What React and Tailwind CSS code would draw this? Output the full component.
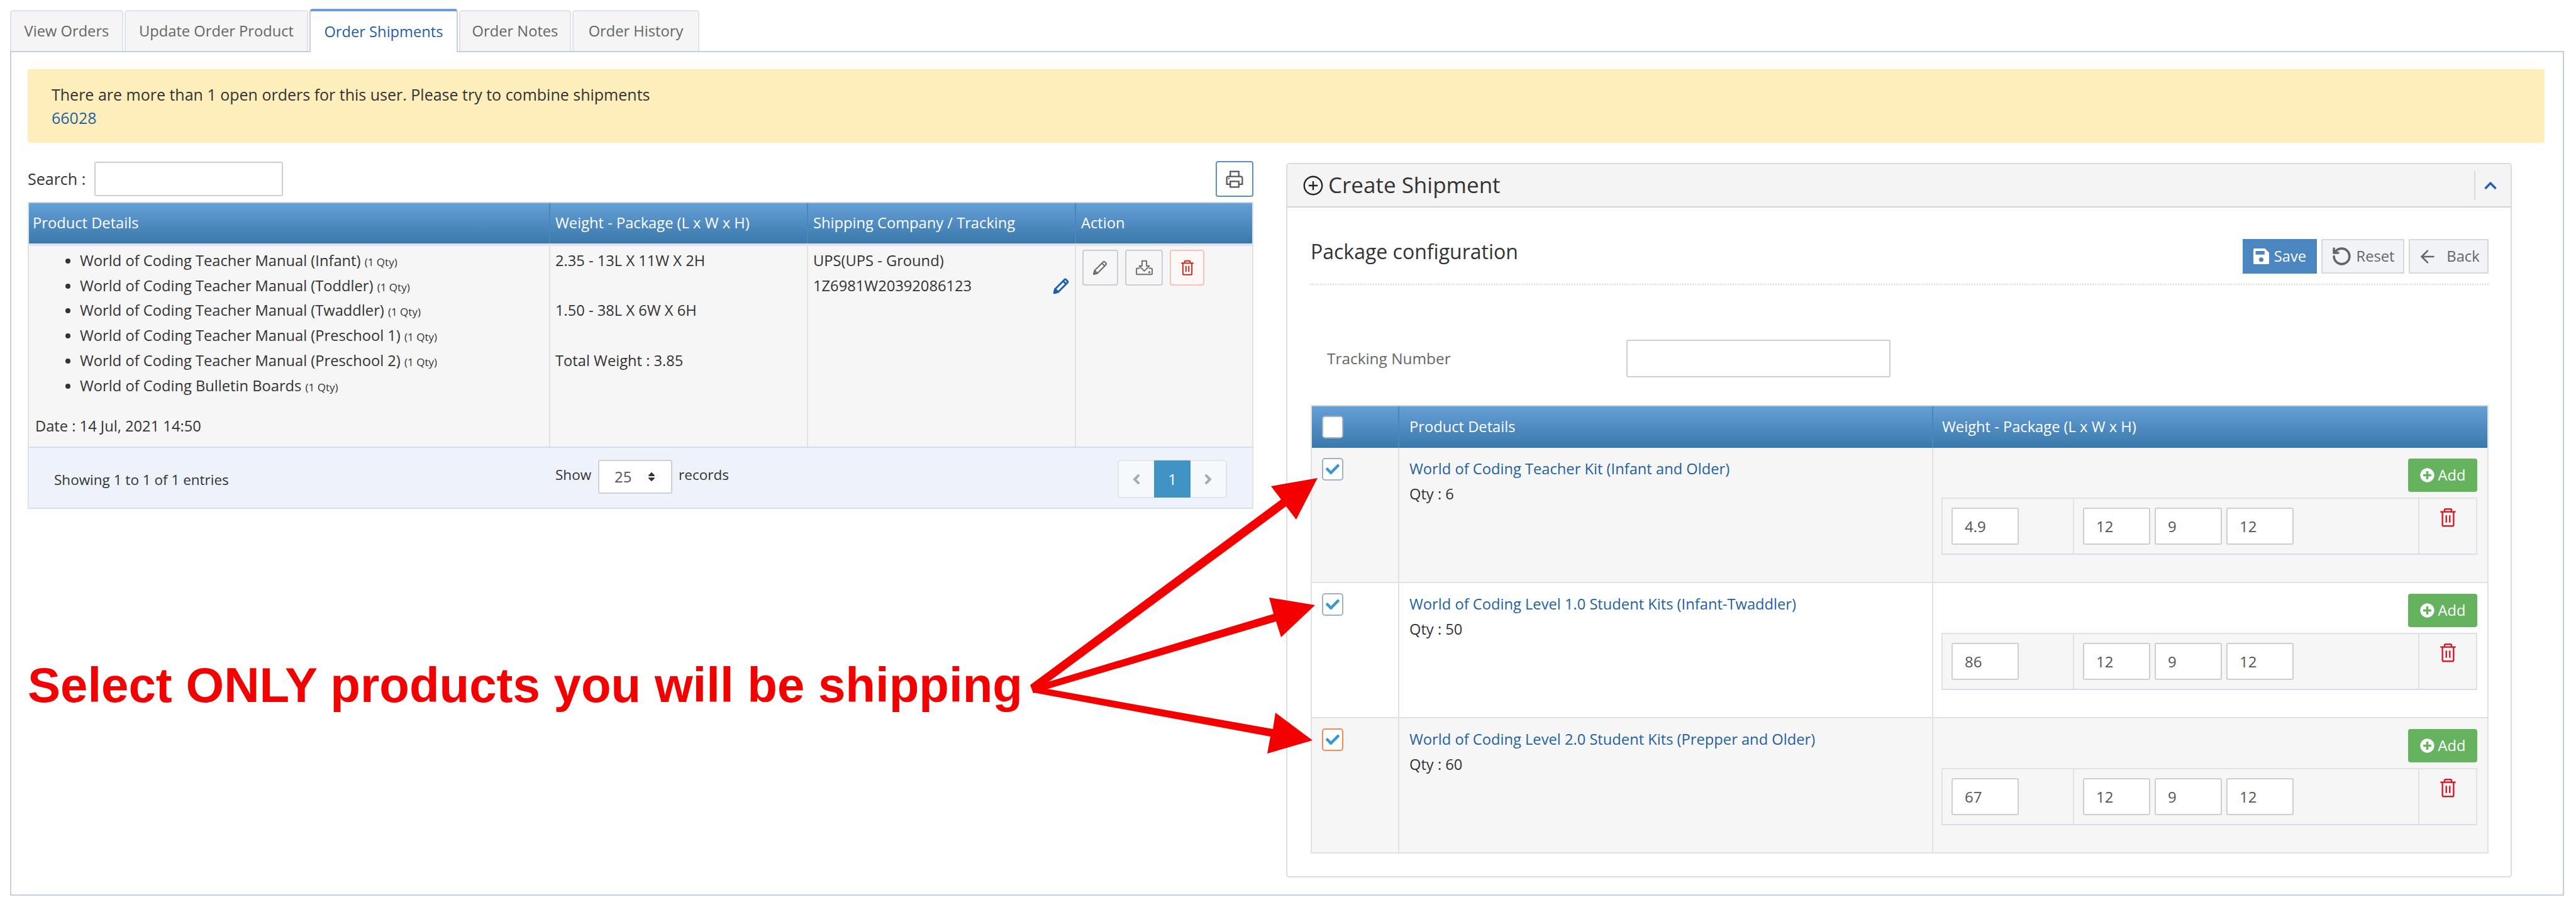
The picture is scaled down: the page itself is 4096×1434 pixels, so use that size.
import { FaPlusCircle, FaCheck, FaAngleLeft, FaAngleRight, FaSort, FaChevronUp } from "react-icons/fa";
import { LiaPrintSolid, LiaPlusCircleSolid } from "react-icons/lia";
import { RotateCcw, ArrowLeft } from "lucide-react";

const tabs = ["View Orders", "Update Order Product", "Order Shipments", "Order Notes", "Order History"];
const tabWidths = ["w-[180px]", "w-[292px]", "w-[236px]", "w-[178px]", "w-[202px]"];

const manuals = [
  "World of Coding Teacher Manual (Infant)",
  "World of Coding Teacher Manual (Toddler)",
  "World of Coding Teacher Manual (Twaddler)",
  "World of Coding Teacher Manual (Preschool 1)",
  "World of Coding Teacher Manual (Preschool 2)",
  "World of Coding Bulletin Boards",
];

const products = [
  { name: "World of Coding Teacher Kit (Infant and Older)", qty: 6, weight: "4.9", bg: "bg-[#f6f6f6]", box: "border-[#9fb2c6]" },
  { name: "World of Coding Level 1.0 Student Kits (Infant-Twaddler)", qty: 50, weight: "86", bg: "bg-white", box: "border-[#9fb2c6]" },
  { name: "World of Coding Level 2.0 Student Kits (Prepper and Older)", qty: 60, weight: "67", bg: "bg-[#f6f6f6]", box: "border-[#ee8a55]" },
];

const headBg = "bg-gradient-to-b from-[#659fd7] to-[#3a78ab]";

const PencilIcon = ({ className, strokeWidth = 2 }) => (
  <svg className={className} viewBox="0 0 24 24" fill="none" stroke="currentColor" strokeWidth={strokeWidth} strokeLinejoin="round">
    <path d="M2 22l1.4-5.6L16.4 3.4a1.8 1.8 0 0 1 2.5 0l1.7 1.7a1.8 1.8 0 0 1 0 2.5L7.6 20.6z" />
    <path d="M14.6 5.2l4.2 4.2" />
    <path d="M2 22l1.4-5.6 4.2 4.2z" fill="currentColor" />
  </svg>
);

const DownloadIcon = ({ className }) => (
  <svg className={className} viewBox="0 0 32 28" fill="none" stroke="currentColor" strokeWidth="2.2" strokeLinejoin="round">
    <path d="M12 2h8v9h5l-9 9-9-9h5z" />
    <path d="M8 15H4a2 2 0 0 0-2 2v8a1 1 0 0 0 1 1h26a1 1 0 0 0 1-1v-8a2 2 0 0 0-2-2h-4" />
    <circle cx="25" cy="22" r="0.8" fill="currentColor" />
  </svg>
);

const TrashIcon = ({ className }) => (
  <svg className={className} viewBox="0 0 24 28" fill="none" stroke="currentColor" strokeWidth="2.2" strokeLinejoin="round">
    <path d="M1 6h22" />
    <path d="M7 6V3.5A1.5 1.5 0 0 1 8.500 2h7A1.500 1.500 0 0 1 17 3.500V6" />
    <path d="M4 6v19a1.500 1.500 0 0 0 1.500 1.500h13A1.500 1.500 0 0 0 20 25V6" />
    <path d="M9.500 11v10.500M14.500 11v10.500" />
  </svg>
);

const SaveIcon = ({ className }) => (
  <svg className={className} viewBox="0 0 28 28" fill="currentColor">
    <path
      fillRule="evenodd"
      d="M2 0h18.500L28 7.500V26a2 2 0 0 1-2 2H2a2 2 0 0 1-2-2V2a2 2 0 0 1 2-2zM4 4.500V11h16V4.500zM14 16a4 4 0 1 0 0 8 4 4 0 0 0 0-8z"
    />
  </svg>
);

const Field = ({ value, className }) => (
  <input
    defaultValue={value}
    className={`h-[59px] border-2 border-[#cfcfcf] rounded-[3px] bg-white pl-[19px] text-[24px] text-[#555] outline-none ${className}`}
  />
);

const Tabs = () => (
  <div className="flex items-end gap-[2px] h-[67px]">
    {tabs.map((tab, i) =>
      i === 2 ? (
        <div
          key={tab}
          className={`${tabWidths[i]} h-[69px] -mb-[2px] relative bg-white border-x-2 border-[#c5d0de] border-t-[4px] border-t-[#6f9bd8] rounded-t-[5px] flex items-center justify-center text-[#23619f] text-[23.7px]`}
        >
          {tab}
        </div>
      ) : (
        <div
          key={tab}
          className={`${tabWidths[i]} h-[65px] bg-[#f5f5f5] border-x-2 border-t-2 border-[#dde3ea] rounded-t-[5px] flex items-center justify-center text-[#666] text-[23.7px]`}
        >
          {tab}
        </div>
      )
    )}
  </div>
);

const OrdersTable = () => (
  <div className="border-x-2 border-[#dfe3e8]">
    {/* header */}
    <div className={`grid grid-cols-[829px_410px_426px_280px] h-[66px] border-t-2 border-[#cfd3d8] ${headBg} text-white text-[23.7px] items-center`}>
      <div className="h-full flex items-center pl-[6px] border-r-2 border-[#4a86ba]">Product Details</div>
      <div className="h-full flex items-center pl-[8px] border-r-2 border-[#4a86ba]">Weight - Package (L x W x H)</div>
      <div className="h-full flex items-center pl-[8px] border-r-2 border-[#4a86ba]">Shipping Company / Tracking</div>
      <div className="h-full flex items-center pl-[8px]">Action</div>
    </div>

    {/* row */}
    <div className="grid grid-cols-[829px_410px_426px_280px] h-[323px] bg-[#f6f6f6] border-t-[4px] border-[#e0e3e8] text-[23.7px] text-[#333]">
      <div className="border-r-2 border-[#e2e2e2] pt-[4px]">
        <ul className="list-disc pl-[81px] leading-[39.7px]">
          {manuals.map((m) => (
            <li key={m}>
              {m} <span className="text-[17px] leading-none">(1 Qty)</span>
            </li>
          ))}
        </ul>
        <div className="mt-[27px] pl-[10px]">Date : 14 Jul, 2021 14:50</div>
      </div>
      <div className="border-r-2 border-[#e2e2e2] pl-[8px] pt-[4px] leading-[39.7px]">
        <div>2.35 - 13L X 11W X 2H</div>
        <div className="mt-[39.7px]">1.50 - 38L X 6W X 6H</div>
        <div className="mt-[39.7px]">Total Weight : 3.85</div>
      </div>
      <div className="border-r-2 border-[#e2e2e2] pl-[8px] pt-[4px] leading-[39.7px]">
        <div>UPS(UPS - Ground)</div>
        <div className="flex items-center justify-between pr-[8px]">
          1Z6981W20392086123
          <PencilIcon className="w-[27px] h-[27px] text-[#1f5fae]" strokeWidth={2.6} />
        </div>
      </div>
      <div className="flex items-start gap-[11px] pl-[10px] pt-[6px]">
        <button className="w-[57px] h-[57px] border-2 border-[#c9ced6] rounded-[4px] bg-[#f6f6f6] flex items-center justify-center">
          <PencilIcon className="w-[25px] h-[25px] text-[#6c7073]" />
        </button>
        <button className="w-[60px] h-[57px] border-2 border-[#c9ced6] rounded-[4px] bg-[#f6f6f6] flex items-center justify-center">
          <DownloadIcon className="w-[29px] h-[25px] text-[#6c7073]" />
        </button>
        <button className="w-[55px] h-[57px] border-2 border-[#f3c4c0] rounded-[4px] bg-[#fdf8f6] flex items-center justify-center">
          <TrashIcon className="w-[22px] h-[25px] text-[#c4281c]" />
        </button>
      </div>
    </div>

    {/* footer */}
    <div className="grid grid-cols-[829px_1fr_auto] h-[99px] bg-[#eef3fb] border-y-2 border-[#d8dde6] text-[#333]">
      <div className="pl-[40px] pt-[34px] text-[22.5px]">Showing 1 to 1 of 1 entries</div>
      <div className="pt-[19px] flex items-start text-[22.5px]">
        <span className="pl-[8px] pr-[11px] mt-[7px]">Show</span>
        <div className="w-[118px] h-[54px] border-2 border-[#d0d0d0] rounded-[3px] bg-white flex items-center justify-between pl-[24px] pr-[22px] text-[24px] text-[#555]">
          25
          <FaSort className="text-[#333] text-[18px]" />
        </div>
        <span className="pl-[10px] mt-[7px]">records</span>
      </div>
      <div className="mr-[40px] mt-[19px] flex items-center h-[61px] border-2 border-[#e2e7ee] rounded-[5px] bg-[#f6f9fc]">
        <div className="w-[56px] flex justify-center text-[#a5abb2] text-[26px]"><FaAngleLeft /></div>
        <div className="w-[58px] h-[59px] bg-[#4193c3] text-white text-[24px] flex items-center justify-center">1</div>
        <div className="w-[56px] flex justify-center text-[#a5abb2] text-[26px]"><FaAngleRight /></div>
      </div>
    </div>
  </div>
);

const ProductRow = ({ item }) => (
  <div className={`grid grid-cols-[139px_849px_1fr] h-[215px] border-b-2 border-[#e2e2e2] ${item.bg} text-[23.7px]`}>
    <div className="border-r-2 border-[#e2e2e2] pl-[16px] pt-[16px]">
      <div className={`w-[34px] h-[36px] border-2 ${item.box} rounded-[5px] bg-white flex items-center justify-center`}>
        <FaCheck className="text-[#3a97cf] text-[22px]" />
      </div>
    </div>
    <div className="border-r-2 border-[#e2e2e2] pl-[16px] pt-[14px] leading-[39.7px]">
      <div className="text-[#23619f]">{item.name}</div>
      <div className="text-[#333]">Qty : {item.qty}</div>
    </div>
    <div className="pl-[13px] pr-[16px] pt-[17px]">
      <div className="flex justify-end">
        <button className="w-[110px] h-[53px] bg-[#65b25f] rounded-[4px] text-white flex items-center justify-center gap-[6px]">
          <FaPlusCircle className="text-[23px]" />
          Add
        </button>
      </div>
      <div className="mt-[9px] h-[91px] grid grid-cols-[209px_549px_1fr] bg-[#f6f6f6] border-2 border-[#e2e2e2] border-b-[#d8dde6]">
        <div className="border-r-2 border-[#e2e2e2] pl-[14px] pt-[14px]">
          <Field value={item.weight} className="w-[107px]" />
        </div>
        <div className="border-r-2 border-[#e2e2e2] pl-[14px] pt-[14px] flex gap-[7px]">
          <Field value="12" className="w-[107px]" />
          <Field value="9" className="w-[107px]" />
          <Field value="12" className="w-[107px]" />
        </div>
        <div className="flex justify-center pt-[14px]">
          <TrashIcon className="w-[27px] h-[31px] text-[#d0202c]" />
        </div>
      </div>
    </div>
  </div>
);

const CreateShipment = () => (
  <div className="w-[1949px] ml-[52px] mt-[3px] h-[1136px] border-2 border-[#dcdcdc] rounded-[5px]">
    <div className="h-[69px] bg-[#f4f4f4] border-b-2 border-[#d4d4d4] flex items-center pl-[22px] rounded-t-[5px]">
      <LiaPlusCircleSolid className="text-[#222] text-[38px] mr-[5px]" />
      <span className="text-[35px] text-[#333]">Create Shipment</span>
      <div className="ml-auto mr-[21px] h-[46px] border-l-2 border-[#d9d9d9] w-[37px] flex items-center justify-end text-[#1f5fae] text-[22px]">
        <FaChevronUp />
      </div>
    </div>
    <div className="pl-[37px] pr-[35px]">
      <div className="flex items-start justify-between pt-[50px] h-[123px] border-b-2 border-dotted border-[#d8d8d8]">
        <div className="text-[32px] text-[#333] -mt-[4px]">Package configuration</div>
        <div className="flex gap-[7px] text-[23.7px]">
          <button className="w-[118px] h-[55px] bg-[#4b86c1] text-white flex items-center justify-center gap-[8px]">
            <SaveIcon className="w-[25px] h-[25px]" />
            Save
          </button>
          <button className="w-[132px] h-[55px] bg-[#f2f3f7] border-2 border-[#d6d8dd] text-[#62656f] flex items-center justify-center gap-[7px]">
            <RotateCcw className="w-[33px] h-[33px]" strokeWidth={2.6} />
            Reset
          </button>
          <button className="w-[127px] h-[55px] bg-[#f2f3f7] border-2 border-[#d6d8dd] text-[#62656f] flex items-center justify-center gap-[14px]">
            <ArrowLeft className="w-[32px] h-[32px]" strokeWidth={2} />
            Back
          </button>
        </div>
      </div>

      <div className="flex items-center h-[60px] mt-[87px]">
        <div className="w-[502px] pl-[26px] text-[24.4px] text-[#666]">Tracking Number</div>
        <input className="w-[420px] h-[60px] border-2 border-[#cfcfcf] rounded-[3px] bg-white outline-none" />
      </div>

      <div className="mt-[44px] border-x-2 border-[#dfe3e8]">
        <div className={`grid grid-cols-[139px_849px_1fr] h-[68px] border-t-2 border-[#cfd3d8] ${headBg} text-white text-[23.7px]`}>
          <div className="flex items-center pl-[16px] border-r-2 border-[#4a86ba]">
            <div className="w-[34px] h-[36px] bg-white border-2 border-[#9fb2c6] rounded-[5px]" />
          </div>
          <div className="flex items-center pl-[16px] border-r-2 border-[#4a86ba]">Product Details</div>
          <div className="flex items-center pl-[14px]">Weight - Package (L x W x H)</div>
        </div>
        {products.map((p) => (
          <ProductRow key={p.name} item={p} />
        ))}
      </div>
    </div>
  </div>
);

const App = () => {
  return (
    <div className="relative w-[4096px] h-[1434px] bg-white pt-[14px] pl-[16px] overflow-hidden font-['Open_Sans',sans-serif]">
      <Tabs />
      <div className="w-[4061px] h-[1343px] border-2 border-[#c5d0de] pt-[27px] pl-[26px]">
        <div className="w-[4002px] h-[117px] bg-[#fdeebb] rounded-[4px] pl-[38px] pt-[22px] text-[25px] leading-[37px] text-[#333]">
          <div>There are more than 1 open orders for this user. Please try to combine shipments</div>
          <div className="text-[#23619f]">66028</div>
        </div>

        <div className="flex mt-[29px]">
          <div className="w-[1949px]">
            <div className="flex items-center justify-between h-[57px] mb-[8px]">
              <div className="flex items-center text-[25px] text-[#333]">
                Search :
                <input className="ml-[14px] w-[300px] h-[55px] border-2 border-[#cfcfcf] rounded-[3px] bg-white outline-none" />
              </div>
              <button className="w-[60px] h-[57px] border-2 border-[#5d8fc6] rounded-[4px] bg-white flex items-center justify-center">
                <LiaPrintSolid className="text-[#555] text-[36px]" />
              </button>
            </div>
            <OrdersTable />
            <div className="mt-[238px] h-[84px] flex items-center font-['Liberation_Sans',sans-serif] font-bold text-[78px] text-[#f40000] whitespace-nowrap">
              Select ONLY products you will be shipping
            </div>
          </div>
          <CreateShipment />
        </div>
      </div>

      {/* red arrows over the page */}
      <svg className="absolute left-0 top-0 pointer-events-none" width="4096" height="1434" viewBox="0 0 4096 1434">
        <polygon fill="#f40000" points="1638,1089 2037,794 2021,773 2095,760 2061,826 2045,805 1643,1102" />
        <polygon fill="#f40000" points="1640,1092 2025,976 2018,950 2091,962 2037,1013 2029,988 1643,1102" />
        <polygon fill="#f40000" points="1642,1091 2024,1159 2028,1133 2087,1177 2015,1198 2020,1171 1643,1101" />
      </svg>
    </div>
  );
};

export default App;
